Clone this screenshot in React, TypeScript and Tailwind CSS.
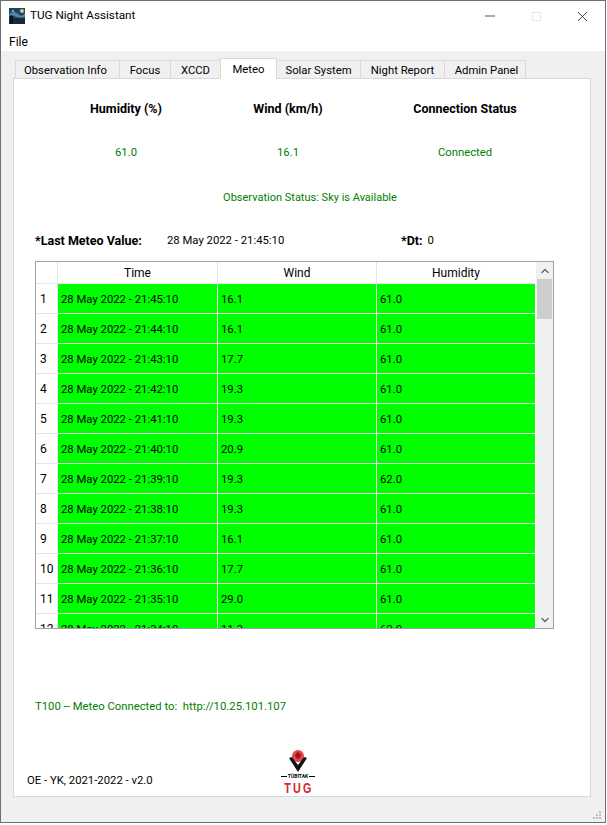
import { Minus, Square, X, ChevronUp, ChevronDown } from "lucide-react";

const tabs = ["Observation Info", "Focus", "XCCD", "Meteo", "Solar System", "Night Report", "Admin Panel"];

const tabWidths: Record<string, string> = {
  "Observation Info": "w-[105px] pr-[4px]",
  Focus: "w-[52px]",
  XCCD: "w-[51px]",
  Meteo: "w-[57px]",
  "Solar System": "w-[85px]",
  "Night Report": "w-[85px]",
  "Admin Panel": "w-[82px] pl-[3px]",
};

const rows = [
  ["28 May 2022 - 21:45:10", "16.1", "61.0"],
  ["28 May 2022 - 21:44:10", "16.1", "61.0"],
  ["28 May 2022 - 21:43:10", "17.7", "61.0"],
  ["28 May 2022 - 21:42:10", "19.3", "61.0"],
  ["28 May 2022 - 21:41:10", "19.3", "61.0"],
  ["28 May 2022 - 21:40:10", "20.9", "61.0"],
  ["28 May 2022 - 21:39:10", "19.3", "62.0"],
  ["28 May 2022 - 21:38:10", "19.3", "61.0"],
  ["28 May 2022 - 21:37:10", "16.1", "61.0"],
  ["28 May 2022 - 21:36:10", "17.7", "61.0"],
  ["28 May 2022 - 21:35:10", "29.0", "61.0"],
  ["28 May 2022 - 21:34:10", "11.3", "62.0"],
];

function AppIcon() {
  return (
    <svg width="16" height="16" viewBox="0 0 16 16" className="shrink-0">
      <rect width="16" height="16" fill="#1d4468" />
      <rect y="10" width="16" height="6" fill="#16283a" />
      <path d="M0 6 Q5 2 9 6 T16 5 V9 Q10 11 5 8 T0 10Z" fill="#4f86a8" />
      <circle cx="13" cy="3" r="2" fill="#d8c860" />
      <circle cx="4" cy="3" r="1" fill="#a9c8b0" />
      <rect x="1" y="8" width="3" height="8" fill="#0e141c" />
    </svg>
  );
}

function TugLogo() {
  return (
    <div className="flex w-[34px] flex-col items-center">
      <svg width="20" height="24" viewBox="0 0 20 24" className="shrink-0">
        <circle cx="10" cy="7" r="6" fill="#e8434a" />
        <path d="M8.5 3.5h3v2h1.5v2h-1.5v2h-3v-2H7v-2h1.5z" fill="#8e1218" />
        <path d="M1 9l3-1 6 8 6-8 3 1-9 14z" fill="#111" />
      </svg>
      <div className="flex h-[6px] w-full items-center gap-[1px]">
        <div className="h-px flex-1 bg-black" />
        <span className="text-[5px] leading-none font-bold text-black">TÜBİTAK</span>
        <div className="h-px flex-1 bg-black" />
      </div>
      <div className="mt-[2px] pl-[3px] font-['Liberation_Sans',sans-serif] text-[15px] leading-[14px] font-bold tracking-[3px] text-[#d8262e] [transform:scaleX(0.72)]">
        TUG
      </div>
    </div>
  );
}

function SizeGrip() {
  return (
    <svg width="9" height="9" viewBox="0 0 9 9" className="absolute right-[3px] bottom-[2px] fill-[#bdbdbd]">
      <rect x="6" y="0" width="2" height="2" />
      <rect x="3" y="3" width="2" height="2" />
      <rect x="6" y="3" width="2" height="2" />
      <rect x="0" y="6" width="2" height="2" />
      <rect x="3" y="6" width="2" height="2" />
      <rect x="6" y="6" width="2" height="2" />
    </svg>
  );
}

export default function App() {
  return (
    <div className="h-[825px] w-[607px] overflow-hidden bg-white font-['Roboto',sans-serif] text-[11.3px] text-black">
      <div className="relative flex h-[823px] w-[606px] flex-col border border-[#6f6f6f] bg-[#f0f0f0]">
        {/* title bar */}
        <div className="flex h-[29px] shrink-0 items-center bg-white pt-[1px] pl-[8px]">
          <AppIcon />
          <span className="ml-[5px] text-[11.7px]">TUG Night Assistant</span>
          <div className="ml-auto flex items-center">
            <div className="flex w-[46px] justify-center"><Minus size={16} strokeWidth={1} className="text-black" /></div>
            <div className="flex w-[46px] justify-center"><Square size={11} strokeWidth={1} className="text-[#c4c4c4]" /></div>
            <div className="flex w-[46px] justify-center"><X size={17} strokeWidth={1} className="text-black" /></div>
          </div>
        </div>
        {/* menu bar */}
        <div className="flex h-[21px] shrink-0 items-center bg-white pt-[2px] pl-[8px] text-[12px]">File</div>

        {/* tabs */}
        <div className="flex h-[27px] shrink-0 items-end pl-[15px]">
          {tabs.map((t) =>
            t === "Meteo" ? (
              <div
                key={t}
                className={`${tabWidths[t]} relative z-10 -mb-px -ml-px flex h-[21px] items-center justify-center border border-b-0 border-[#d9d9d9] bg-white pt-[2px]`}
              >
                {t}
              </div>
            ) : (
              <div
                key={t}
                className={`${tabWidths[t]} -ml-px flex h-[18px] items-center justify-center border border-b-0 border-[#d9d9d9] bg-[#f0f0f0] pt-[3px]`}
              >
                {t}
              </div>
            ),
          )}
        </div>

        {/* pane */}
        <div className="ml-[12px] flex h-[719px] w-[578px] shrink-0 flex-col border border-[#d9d9d9] bg-white">
          <div className="mt-[21px] flex h-[18px] items-center pl-[50px] text-[12.5px] font-bold">
            <div className="w-[124px] text-center">Humidity (%)</div>
            <div className="w-[200px] text-center">Wind (km/h)</div>
            <div className="w-[154px] text-center">Connection Status</div>
          </div>
          <div className="mt-[26px] flex h-[18px] items-center pt-[1px] pl-[50px] text-[#008000]">
            <div className="w-[124px] text-center">61.0</div>
            <div className="w-[200px] text-center">16.1</div>
            <div className="w-[154px] text-center">Connected</div>
          </div>
          <div className="mt-[27px] flex h-[18px] items-center justify-center pt-[1px] pl-[16px] text-[11px] text-[#008000]">
            Observation Status: Sky is Available
          </div>
          <div className="mt-[25px] flex h-[18px] items-center pl-[21px]">
            <span className="w-[132px] text-[12.5px] font-bold">*Last Meteo Value:</span>
            <span className="w-[234px] pt-[1px]">28 May 2022 - 21:45:10</span>
            <span className="text-[12.5px] font-bold">*Dt:</span>
            <span className="ml-[5px] pt-[1px]">0</span>
          </div>

          {/* table */}
          <div className="mt-[11px] ml-[21px] flex h-[368px] w-[519px] shrink-0 border border-[#a0a0a0]">
            <div className="min-w-0 flex-1 overflow-hidden">
              <div className="flex h-[22px] border-b border-[#e5e5e5] text-[12px]">
                <div className="w-[22px] border-r border-[#e5e5e5]" />
                <div className="flex w-[160px] items-center justify-center border-r border-[#e5e5e5]">Time</div>
                <div className="flex w-[159px] items-center justify-center border-r border-[#e5e5e5]">Wind</div>
                <div className="flex w-[158px] items-center justify-center">Humidity</div>
              </div>
              {rows.map((r, i) => (
                <div key={i} className="flex h-[30px] shrink-0">
                  <div className="flex w-[22px] items-center border-r border-b border-[#e5e5e5] pt-[1px] pl-[4px] text-[12px]">{i + 1}</div>
                  <div className="flex w-[160px] items-center border-r border-b border-[#e5e5e5] bg-[#00ff00] pt-[3px] pl-[3px]">{r[0]}</div>
                  <div className="flex w-[159px] items-center border-r border-b border-[#e5e5e5] bg-[#00ff00] pt-[3px] pl-[3px]">{r[1]}</div>
                  <div className="flex w-[158px] items-center border-b border-[#e5e5e5] bg-[#00ff00] pt-[3px] pl-[3px]">{r[2]}</div>
                </div>
              ))}
            </div>
            <div className="flex w-[17px] shrink-0 flex-col items-center bg-[#f0f0f0]">
              <div className="flex h-[17px] items-center justify-center">
                <ChevronUp size={12} strokeWidth={2.5} className="text-[#606060]" />
              </div>
              <div className="h-[40px] w-[15px] bg-[#cdcdcd]" />
              <div className="mt-auto flex h-[17px] items-center justify-center">
                <ChevronDown size={12} strokeWidth={2.5} className="text-[#606060]" />
              </div>
            </div>
          </div>

          <div className="mt-[69px] flex h-[18px] items-center pl-[21px] text-[#008000]">
            T100 -- Meteo Connected to:&nbsp; http://10.25.101.107
          </div>
          <div className="mt-[33px] flex items-end pl-[13px]">
            <span className="mb-[5px] w-[254px]">OE - YK, 2021-2022 - v2.0</span>
            <TugLogo />
          </div>
        </div>
        <SizeGrip />
      </div>
    </div>
  );
}
